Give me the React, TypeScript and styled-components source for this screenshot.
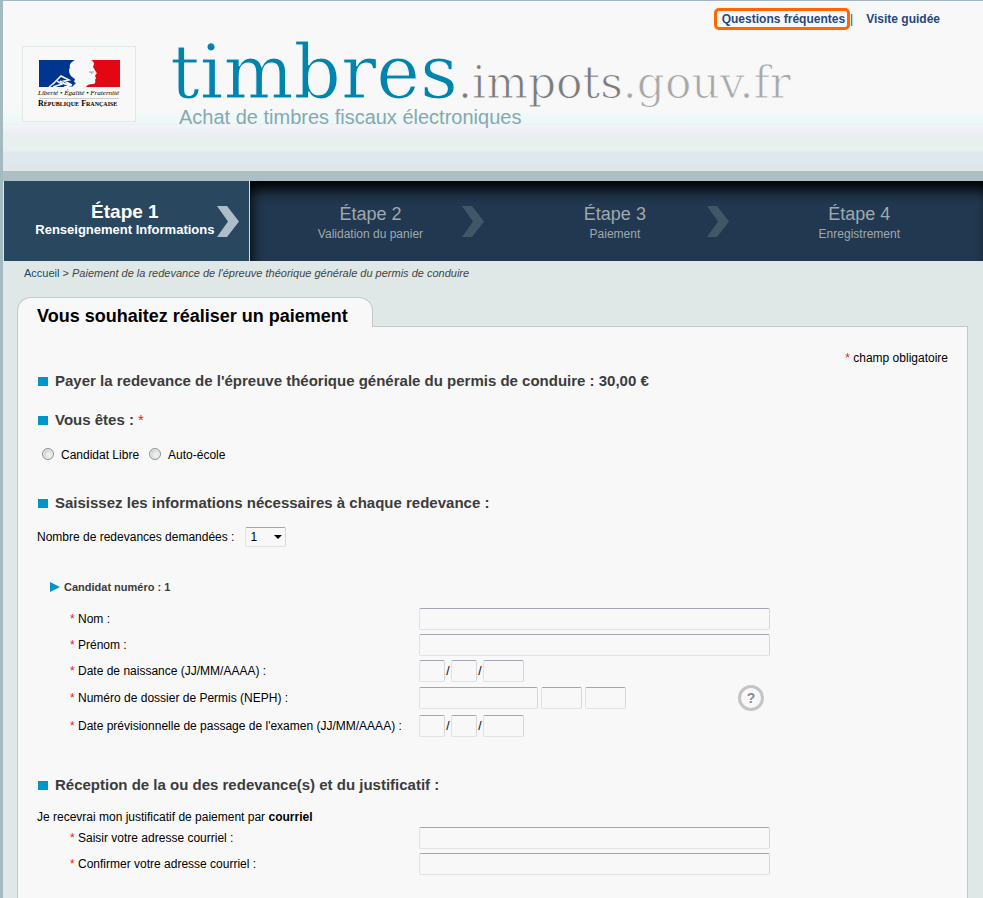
import React from "react";
import styled, { createGlobalStyle } from "styled-components";

const GlobalStyle = createGlobalStyle`
  *, *::before, *::after { box-sizing: border-box; }
  body {
    margin: 0;
    background: #dfe8e6;
    color: #000;
    font: 12px/20px "Liberation Sans", Arial, sans-serif;
  }
  h1, h2, h3, p, ol, fieldset { margin: 0; padding: 0; border: 0; }
`;

const Page = styled.div`
  min-height: 100vh;
  display: flex;
  flex-direction: column;
  border-top: 1px solid #a3b4c7;
  border-left: 3px solid #a3bbc0;
`;

const Header = styled.header`
  height: 170px;
  background: linear-gradient(
    #f8f8f8 0 108px,
    #eff8f8 116px 122px,
    #efeff6 123px,
    #f0f6f8 125px,
    #efeff6 128px,
    #e7efef 136px 150px,
    #dfe7ef 151px 162px,
    #dfe7e7 170px
  );
`;

const TopLinks = styled.nav`
  display: flex;
  justify-content: flex-end;
  align-items: center;
  padding: 7px 43px 0 0;
  font-size: 12px;
  line-height: 14px;
  color: #1f4980;
`;

const TopLink = styled.a<{ $framed?: boolean }>`
  color: #1f4980;
  font-weight: bold;
  text-decoration: none;
  ${({ $framed }) =>
    $framed
      ? "border: 3px solid #f60; border-radius: 5px; padding: 1px 2px 1px 5px;"
      : "margin-left: 13px;"}
`;

const Brand = styled.div`
  display: flex;
  padding: 16px 0 0 19px;
`;

const Emblem = styled.svg`
  flex: none;
  width: 114px;
  height: 76px;
`;

const BrandText = styled.div`
  margin-left: 34px;
`;

const SiteName = styled.h1`
  height: 60px;
  font: 44px/52px "DejaVu Serif", serif;
  color: #7c7c7c;
  white-space: nowrap;
  -webkit-text-stroke: 1px #f8f8f8;
`;

const SiteLead = styled.span`
  font-size: 74px;
  color: #0083ad;
`;

const SiteTail = styled.span`
  color: #a8a8a8;
`;

const Tagline = styled.p`
  padding-left: 9px;
  font-size: 20px;
  line-height: 22px;
  color: #86a8b0;
`;

const Steps = styled.ol`
  display: grid;
  grid-template-columns: minmax(0, 1fr) minmax(0, 3fr);
  height: 90px;
  padding-left: 1px;
  border-top: 10px solid #aebec5;
  list-style: none;
`;

const Upcoming = styled.li`
  display: flex;
  border-left: 1px solid #d0dadf;
  background: #213850;
  box-shadow: inset 4px 12px 14px -3px #000;
`;

const UpcomingList = styled.ol`
  flex: 1;
  display: flex;
  list-style: none;
`;

const StepBox = styled.li<{ $active?: boolean }>`
  flex: 1;
  position: relative;
  display: flex;
  flex-direction: column;
  align-items: center;
  padding-top: ${({ $active }) => ($active ? "20px" : "22px")};
  padding-right: 3px;
  background: ${({ $active }) => ($active ? "#29485f" : "transparent")};
  color: ${({ $active }) => ($active ? "#fff" : "#a0a8ae")};
  font-weight: ${({ $active }) => ($active ? "bold" : "normal")};
`;

const StepTitle = styled.span<{ $active?: boolean }>`
  font-size: ${({ $active }) => ($active ? "19px" : "18px")};
  line-height: 22px;
`;

const StepName = styled.span<{ $active?: boolean }>`
  font-size: ${({ $active }) => ($active ? "13px" : "12px")};
  line-height: ${({ $active }) => ($active ? "14px" : "18px")};
  white-space: nowrap;
`;

const Chevron = styled.svg`
  position: absolute;
  right: 10px;
  top: 25px;
  width: 22px;
  height: 31px;
`;

const Breadcrumb = styled.nav`
  padding: 2px 0 0 21px;
  font-size: 11px;
  color: #444;
`;

const HomeLink = styled.a`
  color: #164a68;
  text-decoration: none;
`;

const Main = styled.main`
  flex: 1;
  display: flex;
  flex-direction: column;
  padding: 14px 15px 0 14px;
`;

const Tab = styled.h2`
  align-self: flex-start;
  z-index: 1;
  height: 30px;
  margin-bottom: -1px;
  padding: 0 24px 0 19px;
  border: 1px solid #c5c8c8;
  border-bottom: 0;
  border-radius: 14px 14px 0 0;
  background: #f8f8f8;
  font-size: 18px;
  line-height: 36px;
`;

const Panel = styled.form`
  flex: 1;
  padding: 21px 19px 12px;
  border: 1px solid #c5c8c8;
  border-bottom: 0;
  background: #f8f8f8;
`;

const Mandatory = styled.p`
  text-align: right;
`;

const Star = styled.span`
  color: #f01818;
  font-weight: normal;
`;

const Heading = styled.h3`
  display: flex;
  align-items: center;
  gap: 7px;
  padding-left: 1px;
  font-size: 15px;
  line-height: 20px;
  color: #3c3c3c;
  &::before {
    content: "";
    width: 10px;
    height: 9px;
    background: #0095c8;
  }
`;

const Section = styled.section<{ $gap: number }>`
  margin-top: ${({ $gap }) => $gap}px;
`;

const Choices = styled.div`
  display: flex;
  gap: 10px;
  padding: 15px 0 0 5px;
`;

const Choice = styled.label`
  display: flex;
  align-items: center;
  gap: 7px;
`;

const Radio = styled.input`
  appearance: none;
  width: 12px;
  height: 12px;
  margin: 0 0 3px;
  border: 1px solid #8d9093;
  border-radius: 50%;
  background: radial-gradient(circle at 60% 60%, #eee 0 20%, #bfc5c9 80%);
  box-shadow: inset 0 0 0 1px #f2f2f2;
`;

const CountRow = styled.div`
  display: flex;
  align-items: center;
  gap: 11px;
  padding-top: 14px;
`;

const frame = `
  border: 1px solid;
  border-color: #a5a5b1 #d6d6df #dfe5e7 #e0e2ea;
  border-radius: 2px;
  background-color: #f8f8f8;
  font: 12px "Liberation Sans", Arial, sans-serif;
`;

const SelectWrap = styled.span`
  display: grid;
  align-items: center;
  & > * { grid-area: 1 / 1; }
`;

const Count = styled.select`
  ${frame}
  appearance: none;
  width: 41px;
  height: 20px;
  padding: 0 4px;
`;

const Caret = styled.svg`
  justify-self: end;
  width: 8px;
  height: 4px;
  margin-right: 4px;
  pointer-events: none;
`;

const Candidate = styled.h3`
  display: flex;
  align-items: center;
  gap: 4px;
  padding: 30px 0 9px 13px;
  font-size: 11px;
  line-height: 20px;
  color: #3c3c3c;
`;

const Arrow = styled.svg`
  width: 10px;
  height: 10px;
`;

const Row = styled.div<{ $tall?: boolean }>`
  display: grid;
  grid-template-columns: 349px auto;
  justify-content: start;
  align-items: center;
  height: ${({ $tall }) => ($tall ? "28px" : "26px")};
  padding-left: 33px;
`;

const Fields = styled.div`
  display: flex;
  align-items: center;
`;

const Field = styled.input<{ $w: number }>`
  ${frame}
  width: ${({ $w }) => $w}px;
  height: 22px;
  padding: 0 4px;
`;

const Slash = styled.span`
  width: 6px;
  text-align: center;
`;

const Numbers = styled(Fields)`
  gap: 3px;
`;

const Help = styled.button`
  width: 26px;
  height: 26px;
  margin-left: 109px;
  padding: 0;
  border: 3px solid #c4c4c4;
  border-radius: 50%;
  background: #f8f8f8;
  color: #8a8a8a;
  font: bold 14px/20px "Liberation Sans", Arial, sans-serif;
`;

const Delivery = styled.p`
  padding-top: 14px;
  line-height: 16px;
`;

function ChevronIcon({ color }: { color: string }) {
  return (
    <Chevron viewBox="0 0 22 31" aria-hidden="true">
      <path d="M0 0h10l12 15.500L10 31H0l11-15.500z" fill={color} />
    </Chevron>
  );
}

function Republic() {
  return (
    <Emblem viewBox="0 0 114 76" role="img" aria-label="République Française">
      <rect x=".5" y=".5" width="113" height="75" fill="#f8f8f8" stroke="#dfe8e6" />
      <path d="M17 14h36c-4 2-6 5-5 7l-1 3c0 3 1 5 3 7l3 2-1 3 2 1-4 4H17z" fill="#00368f" />
      <path d="M31 38l8-8 8 4-5 1 8 4-7-1-5-3" fill="none" stroke="#f8f8f8" strokeWidth="1.500" />
      <path d="M35 35l5 3-9 3M43 38l5 2-6 1M27 41l5-4" fill="none" stroke="#f8f8f8" strokeWidth="1.500" />
      <path d="M69 14h29v27H64c1-2 3-3 7-3 2 0 3-2 2-4l1-2-1-2 1-2c1 0 1-1 0-2l-3-5 1-3c0-2-1-3-3-4z" fill="#e30613" />
      <path d="M67 26h5m-3 0l1 2" stroke="#888" strokeWidth=".8" fill="none" />
      <text x="16" y="49" fontFamily="Liberation Serif" fontStyle="italic" fontSize="7">Liberté • Égalité • Fraternité</text>
      <path d="M17 52.500h80" stroke="#ccc" />
      <text x="16" y="60" fontFamily="Liberation Serif" fontWeight="bold" fontSize="8">R<tspan fontSize="6">ÉPUBLIQUE</tspan> F<tspan fontSize="6">RANÇAISE</tspan></text>
    </Emblem>
  );
}

function DateFields({ id }: { id: string }) {
  return (
    <Fields>
      <Field id={id} $w={26} />
      <Slash>/</Slash>
      <Field $w={26} aria-label="Mois" />
      <Slash>/</Slash>
      <Field $w={41} aria-label="Année" />
    </Fields>
  );
}

function Line({ id, label, tall, children }: { id: string; label: string; tall?: boolean; children: React.ReactNode }) {
  return (
    <Row $tall={tall}>
      <label htmlFor={id}>
        <Star>*</Star> {label}
      </label>
      {children}
    </Row>
  );
}

const upcoming = [
  ["Étape 2", "Validation du panier"],
  ["Étape 3", "Paiement"],
  ["Étape 4", "Enregistrement"],
];

export default function App() {
  return (
    <Page>
      <GlobalStyle />
      <Header>
        <TopLinks>
          <TopLink href="#faq" $framed>Questions fréquentes</TopLink>
          <span>|</span>
          <TopLink href="#visite">Visite guidée</TopLink>
        </TopLinks>
        <Brand>
          <Republic />
          <BrandText>
            <SiteName>
              <SiteLead>timbres</SiteLead>.impots<SiteTail>.gouv.fr</SiteTail>
            </SiteName>
            <Tagline>Achat de timbres fiscaux électroniques</Tagline>
          </BrandText>
        </Brand>
      </Header>
      <Steps>
        <StepBox $active>
          <StepTitle $active>Étape 1</StepTitle>
          <StepName $active>Renseignement Informations</StepName>
          <ChevronIcon color="#aebec8" />
        </StepBox>
        <Upcoming>
          <UpcomingList>
            {upcoming.map(([title, name], i) => (
              <StepBox key={title}>
                <StepTitle>{title}</StepTitle>
                <StepName>{name}</StepName>
                {i < 2 && <ChevronIcon color="#405768" />}
              </StepBox>
            ))}
          </UpcomingList>
        </Upcoming>
      </Steps>
      <Breadcrumb>
        <HomeLink href="#accueil">Accueil</HomeLink> &gt;{" "}
        <em>Paiement de la redevance de l'épreuve théorique générale du permis de conduire</em>
      </Breadcrumb>
      <Main>
        <Tab>Vous souhaitez réaliser un paiement</Tab>
        <Panel>
          <Mandatory><Star>*</Star> champ obligatoire</Mandatory>
          <Section $gap={3}>
            <Heading>Payer la redevance de l'épreuve théorique générale du permis de conduire : 30,00 €</Heading>
          </Section>
          <Section $gap={19}>
            <Heading><span>Vous êtes : <Star>*</Star></span></Heading>
            <Choices role="radiogroup" aria-label="Vous êtes">
              <Choice><Radio type="radio" name="statut" />Candidat Libre</Choice>
              <Choice><Radio type="radio" name="statut" />Auto-école</Choice>
            </Choices>
          </Section>
          <Section $gap={28}>
            <Heading>Saisissez les informations nécessaires à chaque redevance :</Heading>
            <CountRow>
              <label htmlFor="nombre">Nombre de redevances demandées :</label>
              <SelectWrap>
                <Count id="nombre" defaultValue="1">
                  <option>1</option>
                  <option>2</option>
                  <option>3</option>
                </Count>
                <Caret viewBox="0 0 8 4" aria-hidden="true"><path d="M0 0h8L4 4z" /></Caret>
              </SelectWrap>
            </CountRow>
            <Candidate>
              <Arrow viewBox="0 0 10 10" aria-hidden="true"><path d="M0 0l10 5-10 5z" fill="#0095c8" /></Arrow>
              Candidat numéro : 1
            </Candidate>
            <Line id="nom" label="Nom :"><Field id="nom" $w={351} /></Line>
            <Line id="prenom" label="Prénom :"><Field id="prenom" $w={351} /></Line>
            <Line id="naissance" label="Date de naissance (JJ/MM/AAAA) :"><DateFields id="naissance" /></Line>
            <Line id="neph" label="Numéro de dossier de Permis (NEPH) :" tall>
              <Numbers>
                <Field id="neph" $w={119} />
                <Field $w={41} aria-label="NEPH, deuxième partie" />
                <Field $w={41} aria-label="NEPH, troisième partie" />
                <Help type="button" aria-label="Aide">?</Help>
              </Numbers>
            </Line>
            <Line id="examen" label="Date prévisionnelle de passage de l'examen (JJ/MM/AAAA) :" tall><DateFields id="examen" /></Line>
          </Section>
          <Section $gap={35}>
            <Heading>Réception de la ou des redevance(s) et du justificatif :</Heading>
            <Delivery>Je recevrai mon justificatif de paiement par <b>courriel</b></Delivery>
            <Line id="courriel" label="Saisir votre adresse courriel :"><Field id="courriel" type="email" $w={351} /></Line>
            <Line id="confirmation" label="Confirmer votre adresse courriel :"><Field id="confirmation" type="email" $w={351} /></Line>
          </Section>
        </Panel>
      </Main>
    </Page>
  );
}
